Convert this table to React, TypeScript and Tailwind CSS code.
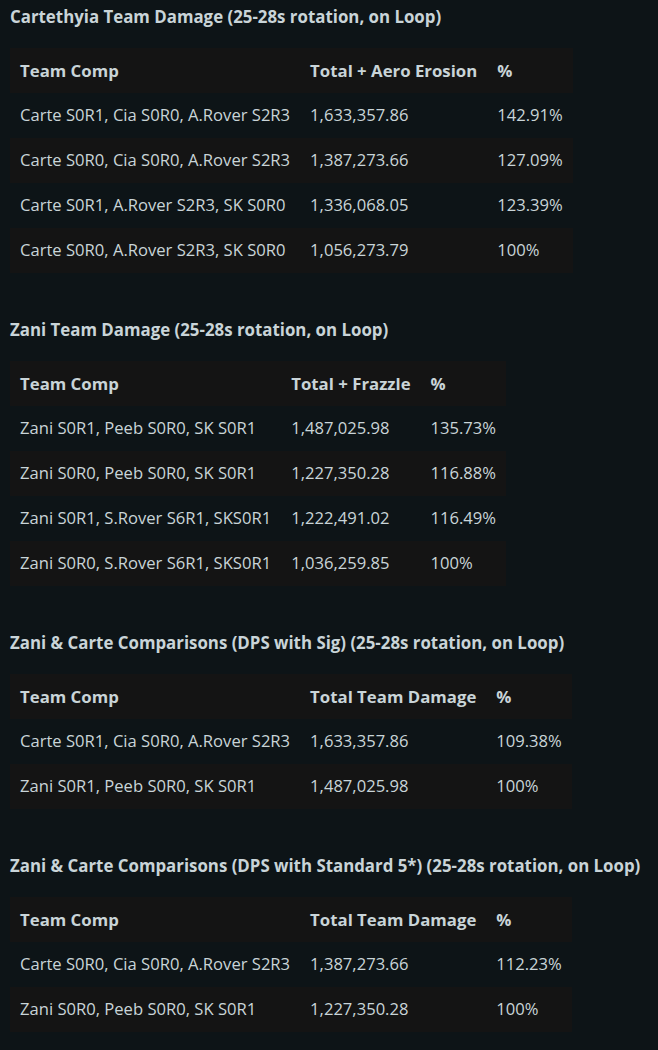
import React from "react";

type Table = {
  title: string;
  head: [string, string, string];
  rows: [string, string, string][];
};

const tables: Table[] = [
  {
    title: "Cartethyia Team Damage (25-28s rotation, on Loop)",
    head: ["Team Comp", "Total + Aero Erosion", "%"],
    rows: [
      ["Carte S0R1, Cia S0R0, A.Rover S2R3", "1,633,357.86", "142.91%"],
      ["Carte S0R0, Cia S0R0, A.Rover S2R3", "1,387,273.66", "127.09%"],
      ["Carte S0R1, A.Rover S2R3, SK S0R0", "1,336,068.05", "123.39%"],
      ["Carte S0R0, A.Rover S2R3, SK S0R0", "1,056,273.79", "100%"],
    ],
  },
  {
    title: "Zani Team Damage (25-28s rotation, on Loop)",
    head: ["Team Comp", "Total + Frazzle", "%"],
    rows: [
      ["Zani S0R1, Peeb S0R0, SK S0R1", "1,487,025.98", "135.73%"],
      ["Zani S0R0, Peeb S0R0, SK S0R1", "1,227,350.28", "116.88%"],
      ["Zani S0R1, S.Rover S6R1, SKS0R1", "1,222,491.02", "116.49%"],
      ["Zani S0R0, S.Rover S6R1, SKS0R1", "1,036,259.85", "100%"],
    ],
  },
  {
    title: "Zani & Carte Comparisons (DPS with Sig) (25-28s rotation, on Loop)",
    head: ["Team Comp", "Total Team Damage", "%"],
    rows: [
      ["Carte S0R1, Cia S0R0, A.Rover S2R3", "1,633,357.86", "109.38%"],
      ["Zani S0R1, Peeb S0R0, SK S0R1", "1,487,025.98", "100%"],
    ],
  },
  {
    title: "Zani & Carte Comparisons (DPS with Standard 5*) (25-28s rotation, on Loop)",
    head: ["Team Comp", "Total Team Damage", "%"],
    rows: [
      ["Carte S0R0, Cia S0R0, A.Rover S2R3", "1,387,273.66", "112.23%"],
      ["Zani S0R0, Peeb S0R0, SK S0R1", "1,227,350.28", "100%"],
    ],
  },
];

const DamageTable = ({ table }: { table: Table }) => {
  return (
    <section>
      <h3 className="font-bold text-[16.85px] leading-6 text-[#c9d4d8] pl-[10px]">{table.title}</h3>
      <table className="mt-[19px] ml-[10px] border-collapse">
        <thead>
          <tr className="bg-[#141414] h-[45px]">
            {table.head.map((h) => (
              <th key={h} className="px-[10px] text-left font-bold text-[16.8px] whitespace-nowrap">
                {h}
              </th>
            ))}
          </tr>
        </thead>
        <tbody>
          {table.rows.map((row, i) => (
            <tr key={i} className={`h-[45px] ${i % 2 === 1 ? "bg-[#141414]" : ""}`}>
              {row.map((cell, j) => (
                <td key={j} className="px-[10px] whitespace-nowrap">
                  {cell}
                </td>
              ))}
            </tr>
          ))}
        </tbody>
      </table>
    </section>
  );
};

export default function App() {
  return (
    <div
      className="min-h-[1050px] w-[658px] bg-[#0d1417] text-[#c9d4d8] text-[16.6px] pt-[5px] flex flex-col gap-[45px]"
      style={{ fontFamily: '"Open Sans", "Noto Sans", sans-serif' }}
    >
      {tables.map((t) => (
        <DamageTable key={t.title} table={t} />
      ))}
    </div>
  );
}
